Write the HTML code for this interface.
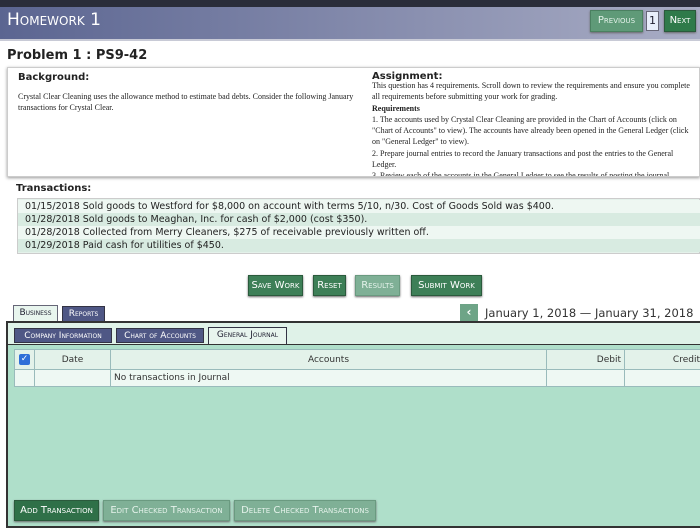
<!DOCTYPE html>
<html><head><style>
*{margin:0;padding:0;box-sizing:border-box}
body{width:700px;height:529px;overflow:hidden;background:#fff;font-family:"DejaVu Sans","Liberation Sans",sans-serif;position:relative}
.a{position:absolute}
.sc{font-variant:small-caps}
.btn{position:absolute;background:#3d7f57;color:#fff;font-size:10px;font-variant:small-caps;text-align:center;border:1px solid #2a5a3c;box-shadow:0 1px 2px #666;white-space:nowrap}
.dis{background:#7fb096;color:#e4f2ea;border-color:#6a9a80}
.serif{font-family:"Liberation Serif",serif;font-size:8px;line-height:11.3px;color:#222}
.tx{position:absolute;left:18px;width:682px;height:13px;font-size:9.5px;line-height:13px;padding-left:7px;color:#222;white-space:nowrap}
.tab{position:absolute;font-size:9px;font-variant:small-caps;text-align:center;line-height:15px;white-space:nowrap}
td{border:1px solid #9bb;font-size:9px;color:#333}
</style></head><body>
<div class="a" style="left:0;top:0;width:700px;height:7px;background:#2a2d3a"></div>
<div class="a" style="left:0;top:7px;width:700px;height:34px;background:linear-gradient(90deg,#5b6591,#8a90b0 60%,#a9adc5);border-bottom:2px solid #c8cad6"></div>
<div class="a sc" style="left:7px;top:10px;color:#fff;font-size:17px">Homework 1</div>
<div class="btn dis" style="left:590px;top:10px;width:53px;height:22px;line-height:20px;background:#5f9a78;border-color:#4a8060">Previous</div>
<div class="a" style="left:646px;top:11px;width:13px;height:20px;background:#e8eefb;border:1px solid #667;font-size:11px;text-align:center;line-height:18px;color:#223">1</div>
<div class="btn" style="left:664px;top:10px;width:32px;height:22px;line-height:20px;background:#2f7a4a">Next</div>
<div class="a" style="left:7px;top:48px;font-size:13px;font-weight:bold;color:#222">Problem 1 : PS9-42</div>
<div class="a" style="left:7px;top:67px;width:693px;height:110px;border:1px solid #ccc;box-shadow:0 1px 3px #999;overflow:hidden;background:#fff">
<div class="a" style="left:10px;top:4px;font-size:10px;font-weight:bold;color:#222">Background:</div>
<div class="a serif" style="left:10px;top:23px;width:340px">Crystal Clear Cleaning uses the allowance method to estimate bad debts. Consider the following January transactions for Crystal Clear.</div>
<div class="a" style="left:364px;top:3px;font-size:10px;font-weight:bold;color:#222">Assignment:</div>
<div class="a serif" style="left:364px;top:12px;width:322px">This question has 4 requirements. Scroll down to review the requirements and ensure you complete all requirements before submitting your work for grading.<br><b>Requirements</b><br>1. The accounts used by Crystal Clear Cleaning are provided in the Chart of Accounts (click on "Chart of Accounts" to view). The accounts have already been opened in the General Ledger (click on "General Ledger" to view).<br>2. Prepare journal entries to record the January transactions and post the entries to the General Ledger.<br>3. Review each of the accounts in the General Ledger to see the results of posting the journal</div>
</div>
<div class="a" style="left:16px;top:183px;font-size:10px;font-weight:bold;color:#222">Transactions:</div>
<div class="a" style="left:17px;top:198px;width:683px;height:56px;border:1px solid #ccc;background:#e4f1ea;overflow:hidden"></div>
<div class="tx" style="top:200px;background:#eef7f2">01/15/2018 Sold goods to Westford for $8,000 on account with terms 5/10, n/30. Cost of Goods Sold was $400.</div>
<div class="tx" style="top:213px;background:#d8ebe1">01/28/2018 Sold goods to Meaghan, Inc. for cash of $2,000 (cost $350).</div>
<div class="tx" style="top:226px;background:#eef7f2">01/28/2018 Collected from Merry Cleaners, $275 of receivable previously written off.</div>
<div class="tx" style="top:239px;background:#d8ebe1">01/29/2018 Paid cash for utilities of $450.</div>
<div class="btn" style="left:248px;top:275px;width:55px;height:21px;line-height:19px">Save Work</div>
<div class="btn" style="left:313px;top:275px;width:33px;height:21px;line-height:19px">Reset</div>
<div class="btn dis" style="left:355px;top:275px;width:45px;height:21px;line-height:19px">Results</div>
<div class="btn" style="left:411px;top:275px;width:71px;height:21px;line-height:19px">Submit Work</div>
<div class="tab" style="left:13px;top:305px;width:45px;height:18px;background:#e8f5ee;border:1px solid #667;border-bottom:none;color:#223">Business</div>
<div class="tab" style="left:62px;top:306px;width:43px;height:16px;background:#4f5785;border:1px solid #334;color:#fff">Reports</div>
<div class="a" style="left:460px;top:304px;width:18px;height:18px;background:#6ea487;color:#fff;font-size:12px;text-align:center;line-height:17px;font-weight:bold">‹</div>
<div class="a" style="left:485px;top:306px;font-size:11.5px;color:#333;white-space:nowrap">January 1, 2018 — January 31, 2018</div>
<div class="a" style="left:6px;top:321px;width:700px;height:207px;background:#afdfca;border:2px solid #333;border-right:none"></div>
<div class="a" style="left:8px;top:323px;width:692px;height:22px;background:#dff2e8"></div>
<div class="tab" style="left:14px;top:328px;width:98px;height:15px;background:#4f5785;color:#fff;border:1px solid #334">Company Information</div>
<div class="tab" style="left:116px;top:328px;width:88px;height:15px;background:#4f5785;color:#fff;border:1px solid #334">Chart of Accounts</div>
<div class="tab" style="left:208px;top:327px;width:79px;height:18px;background:#e8f5ee;color:#223;border:1px solid #334;border-bottom:none">General Journal</div>
<div class="a" style="left:8px;top:344px;width:692px;height:1px;background:#333"></div>
<table class="a" style="left:14px;top:349px;width:690px;border-collapse:collapse;background:#eef8f3">
<tr style="height:20px;background:#e3f2ea"><td style="width:20px;text-align:center"><span style="display:inline-block;width:11px;height:11px;background:#2f6fd8;border-radius:2px;color:#fff;font-size:9px;line-height:11px">✓</span></td><td style="width:76px;text-align:center">Date</td><td style="width:436px;text-align:center">Accounts</td><td style="width:78px;text-align:right;padding-right:3px">Debit</td><td style="text-align:right;padding-right:3px">Credit</td></tr>
<tr style="height:17px"><td></td><td></td><td style="padding-left:3px">No transactions in Journal</td><td></td><td></td></tr>
</table>
<div class="btn" style="left:14px;top:500px;width:85px;height:21px;line-height:19px;background:#2f7048">Add Transaction</div>
<div class="btn dis" style="left:103px;top:500px;width:127px;height:21px;line-height:19px">Edit Checked Transaction</div>
<div class="btn dis" style="left:234px;top:500px;width:142px;height:21px;line-height:19px">Delete Checked Transactions</div>
</body></html>
